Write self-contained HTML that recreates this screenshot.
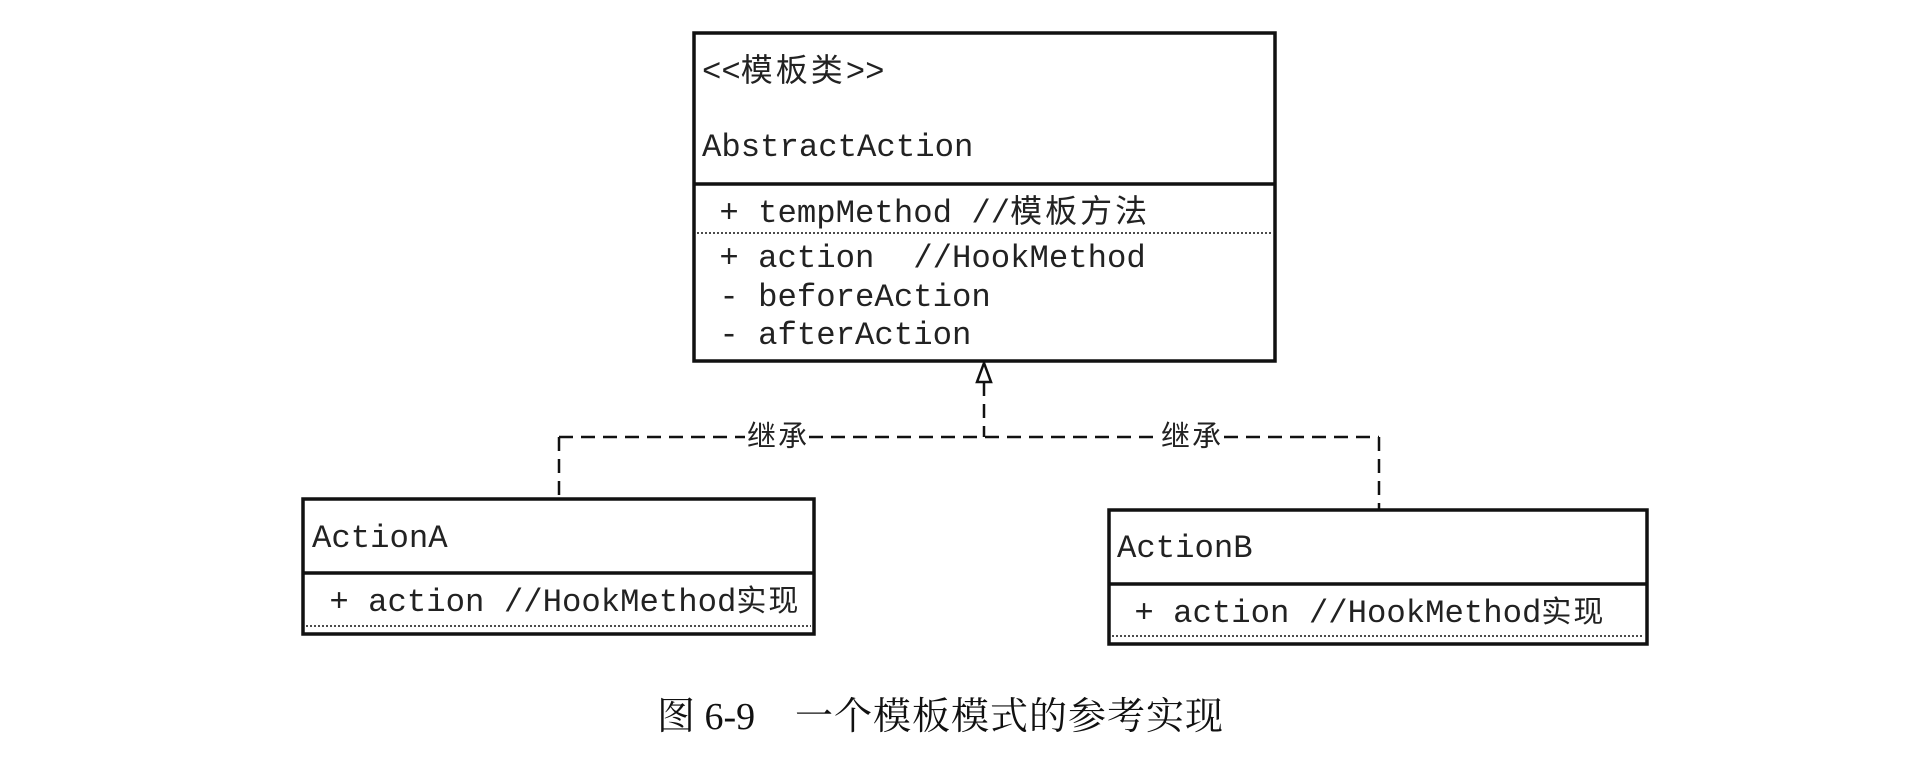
<!DOCTYPE html>
<html><head><meta charset="utf-8"><style>
html,body{margin:0;padding:0;background:#fff;width:1932px;height:762px;overflow:hidden}
svg text.m{font-family:"Liberation Mono","Noto Sans CJK SC",monospace;font-size:32.3px;fill:#222}
svg tspan.k{font-size:32px;letter-spacing:3px}
svg text.c{font-family:"Liberation Serif","Noto Serif CJK SC",serif;font-size:38px;fill:#111}
</style></head><body>
<svg width="1932" height="762" xmlns="http://www.w3.org/2000/svg">
<g fill="none" stroke="#111">
<rect x="694" y="33" width="581" height="328" stroke-width="3.5"/>
<line x1="694" y1="184" x2="1275" y2="184" stroke-width="3.5"/>
<line x1="697" y1="233" x2="1272" y2="233" stroke-width="1.5" stroke-dasharray="2,2"/>
<rect x="303" y="499" width="511" height="135" stroke-width="3.5"/>
<line x1="303" y1="573" x2="814" y2="573" stroke-width="3.5"/>
<line x1="306" y1="626" x2="811" y2="626" stroke-width="1.5" stroke-dasharray="2,2"/>
<rect x="1109" y="510" width="538" height="134" stroke-width="3.5"/>
<line x1="1109" y1="584" x2="1647" y2="584" stroke-width="3.5"/>
<line x1="1112" y1="636" x2="1644" y2="636" stroke-width="1.5" stroke-dasharray="2,2"/>
<polygon points="984,363 977,382 991,382" stroke-width="2.5" fill="#fff"/>
<line x1="984" y1="382" x2="984" y2="437" stroke-width="2.5" stroke-dasharray="14,8"/>
<line x1="559" y1="437" x2="745" y2="437" stroke-width="2.5" stroke-dasharray="14,8"/>
<line x1="809" y1="437" x2="1159" y2="437" stroke-width="2.5" stroke-dasharray="14,8"/>
<line x1="1224" y1="437" x2="1379" y2="437" stroke-width="2.5" stroke-dasharray="14,8"/>
<line x1="559" y1="437" x2="559" y2="499" stroke-width="2.5" stroke-dasharray="14,8"/>
<line x1="1379" y1="437" x2="1379" y2="510" stroke-width="2.5" stroke-dasharray="14,8"/>
</g>
<text class="m" x="702" y="81">&lt;&lt;<tspan class="k">模板类</tspan>&gt;&gt;</text>
<text class="m" x="702" y="156">AbstractAction</text>
<text class="m" x="700" y="222" xml:space="preserve"> + tempMethod //<tspan class="k">模板方法</tspan></text>
<text class="m" x="700" y="267" xml:space="preserve"> + action  //HookMethod</text>
<text class="m" x="700" y="306" xml:space="preserve"> - beforeAction</text>
<text class="m" x="700" y="344" xml:space="preserve"> - afterAction</text>
<text class="m" x="747" y="446" style="font-size:29px;letter-spacing:2px">继承</text>
<text class="m" x="1161" y="446" style="font-size:29px;letter-spacing:2px">继承</text>
<text class="m" x="312" y="547">ActionA</text>
<text class="m" x="310" y="611" xml:space="preserve"> + action //HookMethod<tspan class="k" style="font-size:30px;letter-spacing:2px">实现</tspan></text>
<text class="m" x="1117" y="557">ActionB</text>
<text class="m" x="1115" y="622" xml:space="preserve"> + action //HookMethod<tspan class="k" style="font-size:30px;letter-spacing:2px">实现</tspan></text>
<text class="c" x="657" y="729">图 6-9</text>
<text class="c" x="795" y="729" style="letter-spacing:1px">一个模板模式的参考实现</text>
</svg>
</body></html>
